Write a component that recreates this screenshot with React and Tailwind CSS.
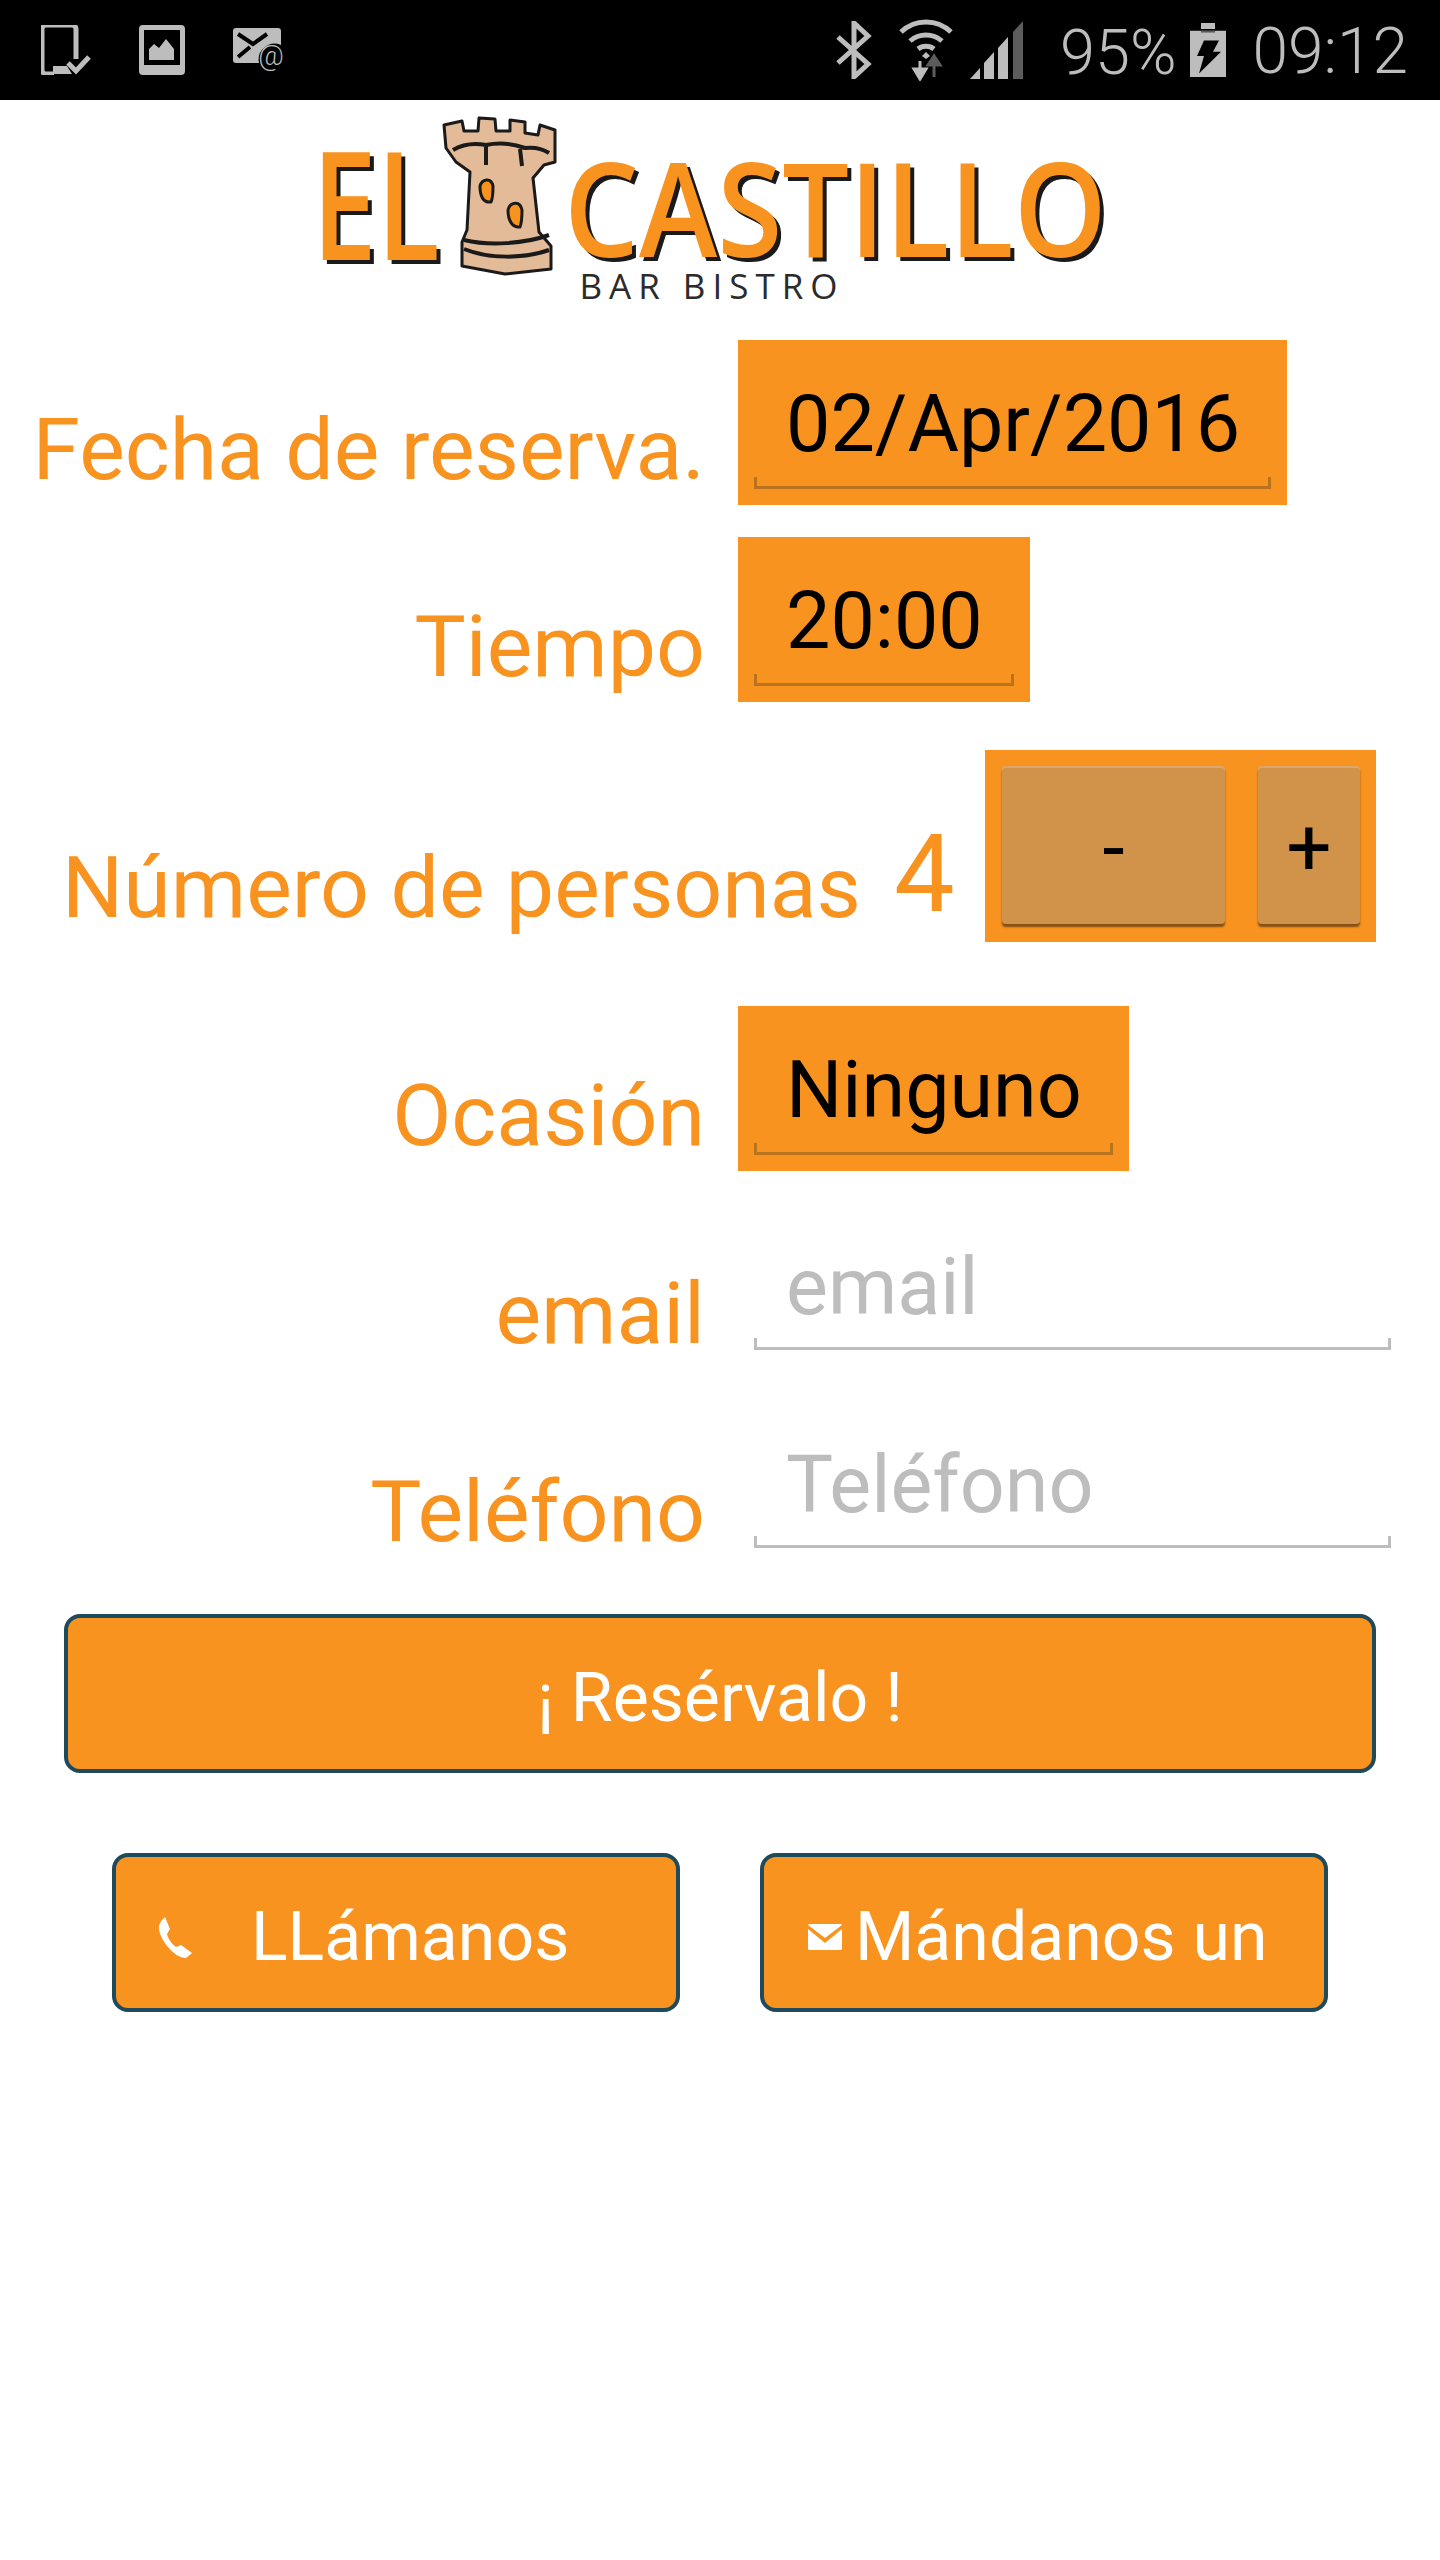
import React from 'react';

const ORANGE_BOX = 'bg-[#f9931f] text-black';
const STEP_BUTTON = 'h-[158px] pt-[6px] rounded-[4px] bg-[#d09349] shadow-[inset_0_2px_0_rgba(255,255,255,0.2),0_3px_2px_rgba(80,50,20,0.7)] text-[80px] leading-none';

function StatusBar() {
  return (
    <div className="h-[100px] bg-black flex items-center text-[#bdbdbd] font-light">
      <svg className="ml-[41px] w-[50px] h-[50px]" viewBox="0 0 50 50" fill="none">
        <path d="M13 49H5a4 4 0 0 1-4-4V4a4 4 0 0 1 4-4h26a4 4 0 0 1 4 4v30" stroke="#bdbdbd" strokeWidth="5" />
        <path d="M12 41h14l5 8H12z" fill="#bdbdbd" />
        <path d="M27 38l8 8 13-14" stroke="#bdbdbd" strokeWidth="5" />
      </svg>
      <svg className="ml-[48px] w-[46px] h-[50px]" viewBox="0 0 46 50">
        <path fillRule="evenodd" d="M4 0h38a4 4 0 0 1 4 4v42a4 4 0 0 1-4 4H4a4 4 0 0 1-4-4V4a4 4 0 0 1 4-4zm1 5v35h36V5z" fill="#bdbdbd" />
        <path d="M10 35V24l5-5 5 4 7-9 8 10v11z" fill="#bdbdbd" />
      </svg>
      <svg className="ml-[48px] w-[52px] h-[44px]" viewBox="0 0 52 44" fill="none">
        <path d="M3 0h42a3 3 0 0 1 3 3v14a16 16 0 0 0-22 18H3a3 3 0 0 1-3-3V3a3 3 0 0 1 3-3z" fill="#bdbdbd" />
        <path d="M5 6l15 10L34 6M5 29l12-10" stroke="#000" strokeWidth="4" />
        <text x="38" y="37" textAnchor="middle" fontSize="28" fontFamily="Roboto" fill="#bdbdbd">@</text>
      </svg>
      <svg className="ml-[550px] w-[38px] h-[58px]" viewBox="0 0 38 58" fill="none">
        <path d="M3 16l30 27-14 13V2l14 13L3 42" stroke="#bdbdbd" strokeWidth="5" />
      </svg>
      <svg className="ml-[25px] w-[56px] h-[62px]" viewBox="0 0 56 62" fill="none">
        <path d="M3 13a36 36 0 0 1 50 0" stroke="#bdbdbd" strokeWidth="5" />
        <path d="M12 22a24 24 0 0 1 32 0" stroke="#bdbdbd" strokeWidth="5" />
        <path d="M20 30a13 13 0 0 1 16 0" stroke="#bdbdbd" strokeWidth="5" />
        <path d="M24 37l4-4 4 4-4 3z" fill="#bdbdbd" />
        <path d="M22 42v12M16 50l6 10 6-10z" stroke="#bdbdbd" strokeWidth="3" fill="#bdbdbd" />
        <path d="M36 58V44M30 46l6-9 6 9z" stroke="#5c5c5c" strokeWidth="3" fill="#5c5c5c" />
      </svg>
      <svg className="ml-[16px] w-[54px] h-[58px]" viewBox="0 0 54 58">
        <path d="M0 58l10-11v11z" fill="#bdbdbd" />
        <path d="M14 58V42l10-11v27z" fill="#bdbdbd" />
        <path d="M28 58V27l10-11v42z" fill="#bdbdbd" />
        <path d="M43 58V11l10-11v58z" fill="#5c5c5c" />
      </svg>
      <span className="ml-[36px] pt-[4px] text-[63px] leading-none">95%</span>
      <svg className="ml-[14px] w-[36px] h-[54px]" viewBox="0 0 36 62" preserveAspectRatio="none">
        <path d="M11 0h14v7h11v55H0V7h11z" fill="#bdbdbd" />
        <path d="M0 7h36v2H0z" fill="#000" />
        <path d="M11 9h14v2H11z" fill="#5c5c5c" />
        <path d="M14 20h15l-6 13h8L9 58l5-20H7z" fill="#000" />
      </svg>
      <span className="ml-[26px] pt-[4px] text-[64px] leading-none">09:12</span>
    </div>
  );
}

function Logo() {
  const small = { fontFamily: 'Open Sans', fontWeight: 600, fontSize: 150 };
  const big = { fontFamily: 'Open Sans', fontWeight: 600, fontSize: 130 };
  return (
    <div className="h-[240px] flex justify-center pt-[16px]">
      <svg className="w-[800px] h-[190px] overflow-visible" viewBox="0 0 800 190">
        <text x="-8" y="144" textLength="128" lengthAdjust="spacingAndGlyphs" fill="#f9931f" className="drop-shadow-[4px_4px_0_#1a1a1a]" style={small}>EL</text>
        <text x="244" y="141" textLength="543" lengthAdjust="spacingAndGlyphs" fill="#f9931f" className="drop-shadow-[4px_4px_0_#1a1a1a]" style={big}>CASTILLO</text>
        <g transform="translate(124 2)" stroke="#1a1a1a" strokeWidth="3" fill="#e3bb98" strokeLinejoin="round">
          <path d="M0 7l18-4 2 10h14l1-13 16 1 1 12h14V2l15 2v11l13 2 2-10 15 5v32l-11 3-11 13 6 54 12 14v23l-46 5-43-8v-24l5-12 3-58-14-10-10-14z" />
          <path d="M9 32c10-6 22-7 33-5 14-3 28-1 39 3 10-1 18 1 24 5M42 27v20M76 31l2 17" fill="none" strokeWidth="4" />
          <path d="M20 122c25 6 60 4 85-5M20 131c25 10 60 10 85 1" fill="none" strokeWidth="4" />
          <path d="M36 68c2-7 11-9 13 0 0 6 0 12-2 16-8 1-11-6-11-16zM64 92c2-8 12-10 14 0 0 6 0 12-2 17-8 1-12-7-12-17z" fill="#f9931f" strokeWidth="3" />
        </g>
        <text x="392" y="183" textAnchor="middle" fontFamily="Open Sans" fontSize="35" letterSpacing="7" fill="#2b2b2b">BAR BISTRO</text>
      </svg>
    </div>
  );
}

function Label({ children, className }) {
  return <div className={`w-[705px] text-right text-[#f9931f] text-[86px] leading-none ${className}`}>{children}</div>;
}

function Bracket({ className }) {
  return <div className={`h-[12px] border-x-[3px] border-b-[3px] ${className}`} />;
}

function Picker({ value }) {
  return (
    <div className={`ml-[33px] h-[165px] px-[16px] pt-[42px] ${ORANGE_BOX}`}>
      <div className="pl-[32px] pr-[31px] h-[95px] text-[79px] leading-[84px] whitespace-nowrap">{value}</div>
      <Bracket className="border-[#b9731f]" />
    </div>
  );
}

function TextRow({ label, placeholder }) {
  return (
    <div className="flex h-[198px]">
      <Label className="pt-[68px]">{label}</Label>
      <div className="ml-[49px] w-[637px]">
        <div className="pl-[32px] h-[135px] pt-[42px] text-[79px] leading-[84px] text-[#bdbdbd]">{placeholder}</div>
        <Bracket className="border-[#bdbdbd]" />
      </div>
    </div>
  );
}

function ActionButton({ children, className }) {
  return (
    <button className={`h-[159px] pt-[8px] bg-[#f9931f] border-[4px] border-[#1f4a5c] rounded-[16px] text-white text-[68px] flex items-center ${className}`}>
      {children}
    </button>
  );
}

export default function App() {
  return (
    <div className="w-[1440px] min-h-[2560px] bg-white font-['Roboto',sans-serif]">
      <StatusBar />
      <Logo />
      <div className="flex h-[197px]">
        <Label className="pt-[67px]">Fecha de reserva.</Label>
        <Picker value="02/Apr/2016" />
      </div>
      <div className="flex h-[213px]">
        <Label className="pt-[67px]">Tiempo</Label>
        <Picker value="20:00" />
      </div>
      <div className="flex h-[256px]">
        <div className="w-[861px] pt-[95px] text-right text-[#f9931f] text-[86px] leading-none">Número de personas</div>
        <div className="ml-[33px] w-[91px] pt-[70px] text-[#f9931f] text-[108px] leading-none">4</div>
        <div className={`h-[192px] w-[391px] pl-[17px] pt-[16px] flex gap-[33px] ${ORANGE_BOX}`}>
          <button className={`w-[223px] ${STEP_BUTTON}`}>-</button>
          <button className={`w-[102px] ${STEP_BUTTON}`}>+</button>
        </div>
      </div>
      <div className="flex h-[197px]">
        <Label className="pt-[67px]">Ocasión</Label>
        <Picker value="Ninguno" />
      </div>
      <TextRow label="email" placeholder="email" />
      <TextRow label="Teléfono" placeholder="Teléfono" />
      <div className="px-[64px] mt-[15px]">
        <ActionButton className="w-full justify-center">¡ Resérvalo !</ActionButton>
      </div>
      <div className="flex gap-[80px] px-[112px] mt-[80px]">
        <ActionButton className="w-[568px] pl-[43px]">
          <svg className="w-[34px] h-[42px]" viewBox="0 0 34 42" fill="#fff">
            <path d="M6 1l5 12-3 5c1 5 5 10 9 13l5-2 11 8-6 5c-6 0-12-4-18-11C3 24 0 17 0 12c0-5 3-8 6-11z" />
          </svg>
          <span className="ml-[58px]">LLámanos</span>
        </ActionButton>
        <ActionButton className="w-[568px] pl-[44px]">
          <svg className="w-[34px] h-[26px]" viewBox="0 0 34 26" fill="#fff">
            <path d="M1 0h32l1 1-17 13L0 1z" />
            <path d="M0 5l17 14L34 5v20l-1 1H1l-1-1z" />
          </svg>
          <span className="ml-[13px]">Mándanos un</span>
        </ActionButton>
      </div>
    </div>
  );
}
